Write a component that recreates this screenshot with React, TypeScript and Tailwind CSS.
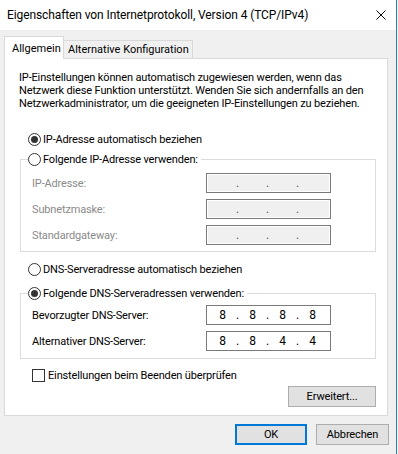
import { ReactNode } from "react";

const font = { fontFamily: '"Segoe UI", Roboto, sans-serif' };

function Radio({ checked }: { checked?: boolean }) {
  return (
    <span className="w-[13px] h-[13px] rounded-full border border-[#333] bg-white flex items-center justify-center shrink-0">
      {checked && <span className="w-[7px] h-[7px] rounded-full bg-[#333]" />}
    </span>
  );
}

function RadioRow({ checked, children }: { checked?: boolean; children: ReactNode }) {
  return (
    <div className="flex items-center gap-[2px] h-[13px] whitespace-nowrap">
      <Radio checked={checked} />
      <span>{children}</span>
    </div>
  );
}

function IpBox({ parts, disabled }: { parts: string[]; disabled?: boolean }) {
  const cells: string[] = [];
  parts.forEach((p, i) => {
    cells.push(p);
    if (i < 3) cells.push(".");
  });
  return (
    <div
      className={
        "w-[125px] h-[20px] border flex items-center pl-[8px] tracking-normal text-[12px] " +
        (disabled
          ? "border-[#7a7a7a] bg-[#f0f0f0] shadow-[inset_0_0_0_1px_#ffffff] text-[#5a5a5a]"
          : "border-[#7a7a7a] bg-white text-black")
      }
    >
      {cells.map((c, i) => (
        <span key={i} className="w-[15px] text-center leading-[13px]">
          {c}
        </span>
      ))}
    </div>
  );
}

function FieldRow({ label, parts, disabled }: { label: string; parts: string[]; disabled?: boolean }) {
  return (
    <div className="flex items-center h-[20px]">
      <span className={"w-[174px] whitespace-nowrap " + (disabled ? "text-[#8a8a8a]" : "text-black")}>{label}</span>
      <IpBox parts={parts} disabled={disabled} />
    </div>
  );
}

function Group({ legend, children, pt, pb }: { legend: ReactNode; children: ReactNode; pt: string; pb: string }) {
  return (
    <fieldset className="ml-[1px] w-[356px] border border-[#dcdcdc]">
      <legend className="ml-[7px] pr-[3px]">{legend}</legend>
      <div className={"flex flex-col gap-[6px] pl-[11px] " + pt + " " + pb}>{children}</div>
    </fieldset>
  );
}

export default function App() {
  return (
    <div className="w-[398px] h-[454px] bg-white flex text-[11px] tracking-[-0.15px] leading-[13px] text-black" style={font}>
      <div className="w-[397px] h-full border-r border-[#1883d7] flex flex-col">
        {/* title bar */}
        <div className="h-[30px] bg-white flex items-center pl-[7px] pr-[10px] shrink-0 text-[12px] tracking-[-0.1px]">
          <span className="flex-1 whitespace-nowrap">Eigenschaften von Internetprotokoll, Version 4 (TCP/IPv4)</span>
          <svg width="10" height="10" viewBox="0 0 10 10" className="shrink-0">
            <path d="M0.5 0.5 L9.5 9.5 M9.5 0.5 L0.5 9.5" stroke="#000" strokeWidth="1" fill="none" />
          </svg>
        </div>

        <div className="flex-1 bg-[#f0f0f0] flex flex-col pt-[6px] pl-[4px]">
          {/* tabs */}
          <div className="flex items-end h-[22px] tracking-normal">
            <div className="relative z-10 w-[60px] h-[23px] -mb-[1px] bg-white border border-b-0 border-[#d9d9d9] pl-[7px] pt-[5px] whitespace-nowrap">
              Allgemein
            </div>
            <div className="w-[129px] h-[18px] bg-[#f0f0f0] border border-b-0 border-l-0 border-[#d9d9d9] flex items-center pl-[4px] whitespace-nowrap">
              Alternative Konfiguration
            </div>
          </div>

          {/* panel */}
          <div className="w-[384px] h-[358px] bg-white border border-[#d9d9d9] flex flex-col pl-[14px] pr-[11px]">
            <p className="pt-[12px] whitespace-nowrap">
              IP-Einstellungen können automatisch zugewiesen werden, wenn das
              <br />
              Netzwerk diese Funktion unterstützt. Wenden Sie sich andernfalls an den
              <br />
              Netzwerkadministrator, um die geeigneten IP-Einstellungen zu beziehen.
            </p>

            <div className="mt-[23px] ml-[9px]">
              <RadioRow checked>IP-Adresse automatisch beziehen</RadioRow>
            </div>

            <div className="mt-[7px]">
              <Group legend={<RadioRow>Folgende IP-Adresse verwenden:</RadioRow>} pt="pt-[7px]" pb="pb-[6px]">
                <FieldRow label="IP-Adresse:" parts={["", "", "", ""]} disabled />
                <FieldRow label="Subnetzmaske:" parts={["", "", "", ""]} disabled />
                <FieldRow label="Standardgateway:" parts={["", "", "", ""]} disabled />
              </Group>
            </div>

            <div className="mt-[11px] ml-[9px]">
              <RadioRow>DNS-Serveradresse automatisch beziehen</RadioRow>
            </div>

            <div className="mt-[11px]">
              <Group legend={<RadioRow checked>Folgende DNS-Serveradressen verwenden:</RadioRow>} pt="pt-[5px]" pb="pb-[7px]">
                <FieldRow label="Bevorzugter DNS-Server:" parts={["8", "8", "8", "8"]} />
                <FieldRow label="Alternativer DNS-Server:" parts={["8", "8", "4", "4"]} />
              </Group>
            </div>

            <div className="mt-[10px] ml-[13px] flex items-center gap-[3px] h-[13px] whitespace-nowrap">
              <span className="w-[13px] h-[13px] border border-[#333] bg-white shrink-0" />
              <span>Einstellungen beim Beenden überprüfen</span>
            </div>

            <div className="mt-[4px] flex justify-end">
              <button className="w-[88px] h-[21px] bg-[#e1e1e1] border border-[#adadad] flex items-center justify-center">
                Erweitert...
              </button>
            </div>
          </div>

          {/* footer */}
          <div className="mt-[8px] flex justify-end gap-[9px] pr-[7px]">
            <button className="w-[72px] h-[21px] bg-[#e1e1e1] border-2 border-[#0078d7] flex items-center justify-center">
              OK
            </button>
            <button className="w-[73px] h-[21px] bg-[#e1e1e1] border border-[#adadad] flex items-center justify-center">
              Abbrechen
            </button>
          </div>
        </div>
      </div>
    </div>
  );
}
